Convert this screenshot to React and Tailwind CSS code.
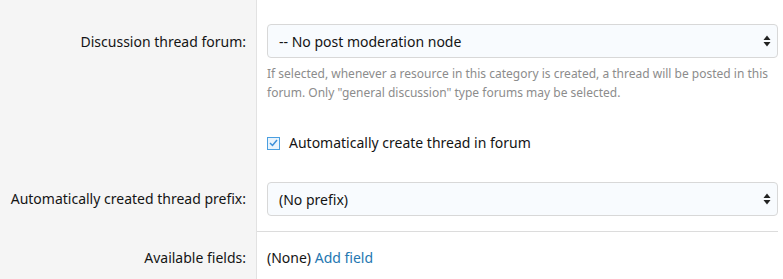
import React from 'react'

const font = { fontFamily: '"Segoe UI", "Noto Sans", sans-serif' }

function SelectBox({ value }) {
  return (
    <div className="flex h-[34px] items-center justify-between rounded-[4px] border border-[#d8d8d8] bg-[#f8fbfe] pl-[11px] pr-[6px] text-[14px] text-[#141414]">
      <span>{value}</span>
      <svg width="8" height="12" viewBox="0 0 8 12">
        <path d="M4 0.5 L7.5 5 L0.5 5 Z" fill="#222" />
        <path d="M4 11.5 L7.5 7 L0.5 7 Z" fill="#222" />
      </svg>
    </div>
  )
}

function Label({ children, className = '' }) {
  return (
    <div className={'w-[257px] shrink-0 whitespace-nowrap border-r border-[#e2e2e2] bg-[#f5f5f5] pr-[10px] text-right text-[14px] leading-[20px] text-[#141414] ' + className}>
      {children}
    </div>
  )
}

export default function App() {
  return (
    <div className="h-[279px] w-[783px] overflow-hidden bg-white" style={font}>
      {/* bloque del foro */}
      <div className="flex">
        <Label className="pt-[32px]">Discussion thread forum:</Label>
        <div className="flex-1 pl-[10px] pr-[5px] pt-[24px]">
          <SelectBox value="-- No post moderation node" />
          <p className="mt-[6px] text-[12px] leading-[19px] text-[#8c8c8c]">
            If selected, whenever a resource in this category is created, a thread will be posted in this forum. Only "general discussion" type forums may be selected.
          </p>
          <label className="mt-[31px] flex items-center gap-[9px] text-[14px] leading-[20px] text-[#141414]">
            <span className="flex h-[13px] w-[13px] items-center justify-center border border-[#4a9fe0] bg-[#eaf4fc]">
              <svg width="9" height="8" viewBox="0 0 9 8">
                <path d="M1 4 L3.5 6.5 L8 1" stroke="#3b8ed8" strokeWidth="1.5" fill="none" />
              </svg>
            </span>
            Automatically create thread in forum
          </label>
        </div>
      </div>

      {/* prefijo */}
      <div className="flex">
        <Label className="pt-[36px] pb-[22px]">Automatically created thread prefix:</Label>
        <div className="flex-1 pl-[10px] pr-[5px] pt-[29px] pb-[15px]">
          <SelectBox value="(No prefix)" />
        </div>
      </div>

      <div className="flex">
        <Label className="pt-[17px] pb-[40px]">Available fields:</Label>
        <div className="flex-1 pr-[5px]">
          <div className="border-t border-[#dcdcdc] pl-[10px] pt-[16px] text-[14px] leading-[20px] text-[#141414]">
            (None) <span className="text-[#2577b1]">Add field</span>
          </div>
        </div>
      </div>
    </div>
  )
}
